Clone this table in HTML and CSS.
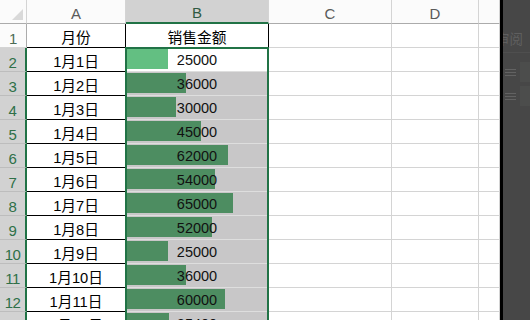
FILE: index.html
```html
<!DOCTYPE html>
<html lang="zh-CN">
<head>
<meta charset="utf-8">
<title>销售金额</title>
<link rel="stylesheet" href="styles.css">
</head>
<body>
<div class="page">
  <div class="sheet">
    <div class="grid">
      <div class="hd corner"><span class="tri"></span></div>
      <div class="hd col">A</div>
      <div class="hd col sel">B</div>
      <div class="hd col">C</div>
      <div class="hd col">D</div>
      <div class="hd col"></div>

      <div class="rh">1</div>
      <div class="a top">月份</div>
      <div class="b title">销售金额</div>
      <div class="c"></div><div class="c"></div><div class="c"></div>

      <div class="rh on">2</div>
      <div class="a">1月1日</div>
      <div class="b active"><div class="bar" style="width:41px"></div><span class="v">25000</span></div>
      <div class="c"></div><div class="c"></div><div class="c"></div>

      <div class="rh on">3</div>
      <div class="a">1月2日</div>
      <div class="b"><div class="bar" style="width:59px"></div><span class="v">36000</span></div>
      <div class="c"></div><div class="c"></div><div class="c"></div>

      <div class="rh on">4</div>
      <div class="a">1月3日</div>
      <div class="b"><div class="bar" style="width:49px"></div><span class="v">30000</span></div>
      <div class="c"></div><div class="c"></div><div class="c"></div>

      <div class="rh on">5</div>
      <div class="a">1月4日</div>
      <div class="b"><div class="bar" style="width:74px"></div><span class="v">45000</span></div>
      <div class="c"></div><div class="c"></div><div class="c"></div>

      <div class="rh on">6</div>
      <div class="a">1月5日</div>
      <div class="b"><div class="bar" style="width:101px"></div><span class="v">62000</span></div>
      <div class="c"></div><div class="c"></div><div class="c"></div>

      <div class="rh on">7</div>
      <div class="a">1月6日</div>
      <div class="b"><div class="bar" style="width:88px"></div><span class="v">54000</span></div>
      <div class="c"></div><div class="c"></div><div class="c"></div>

      <div class="rh on">8</div>
      <div class="a">1月7日</div>
      <div class="b"><div class="bar" style="width:106px"></div><span class="v">65000</span></div>
      <div class="c"></div><div class="c"></div><div class="c"></div>

      <div class="rh on">9</div>
      <div class="a">1月8日</div>
      <div class="b"><div class="bar" style="width:85px"></div><span class="v">52000</span></div>
      <div class="c"></div><div class="c"></div><div class="c"></div>

      <div class="rh on">10</div>
      <div class="a">1月9日</div>
      <div class="b"><div class="bar" style="width:41px"></div><span class="v">25000</span></div>
      <div class="c"></div><div class="c"></div><div class="c"></div>

      <div class="rh on">11</div>
      <div class="a">1月10日</div>
      <div class="b"><div class="bar" style="width:59px"></div><span class="v">36000</span></div>
      <div class="c"></div><div class="c"></div><div class="c"></div>

      <div class="rh on">12</div>
      <div class="a">1月11日</div>
      <div class="b"><div class="bar" style="width:98px"></div><span class="v">60000</span></div>
      <div class="c"></div><div class="c"></div><div class="c"></div>

      <div class="rh on">13</div>
      <div class="a">1月12日</div>
      <div class="b"><div class="bar" style="width:42px"></div><span class="v">25400</span></div>
      <div class="c"></div><div class="c"></div><div class="c"></div>
    </div>
    <div class="selection"></div>
  </div>
  <div class="divider"></div>
  <div class="panel">
    <div class="ghost-tab">审阅</div>
    <div class="ghost-rule"></div>
    <div class="ghost-row"><span class="lines"><i></i><i></i><i></i></span><span class="box"></span></div>
    <div class="ghost-row"><span class="lines"><i></i><i></i><i></i></span><span class="box"></span></div>
  </div>
</div>
</body>
</html>
```

FILE: styles.css
```css
* { box-sizing: border-box; }
html, body { margin: 0; padding: 0; }
body {
  width: 530px;
  height: 320px;
  overflow: hidden;
  background: #fff;
  font-family: "Liberation Sans", "Noto Sans CJK SC", sans-serif;
}
.page {
  display: flex;
  width: 530px;
  height: 320px;
  overflow: hidden;
}
.sheet {
  position: relative;
  width: 500px;
  height: 320px;
  overflow: hidden;
  background: #fff;
}
.grid {
  display: grid;
  grid-template-columns: 27px 99px 143px 123px 87px 21px;
  grid-template-rows: 24px;
  grid-auto-rows: 24px;
}
.grid > div {
  border-right: 1px solid #d4d4d4;
  border-bottom: 1px solid #d4d4d4;
}
.hd {
  background: #fbfbfb;
  border-bottom-color: #ababab !important;
  color: #5a5a5a;
  font-size: 15px;
  display: flex;
  justify-content: center;
  align-items: flex-end;
  padding-bottom: 1px;
}
.corner {
  position: relative;
  align-items: flex-end;
  justify-content: flex-end;
  padding: 0 3px 3px 0;
}
.tri {
  width: 0;
  height: 0;
  border-left: 11px solid transparent;
  border-bottom: 11px solid #d9d9d9;
}
.hd.sel {
  background: #d2d2d2;
  color: #2f5a42;
  border-bottom: 2px solid #217346 !important;
}
.rh {
  background: #fbfbfb;
  color: #4a6b55;
  font-size: 15px;
  display: flex;
  justify-content: center;
  align-items: flex-end;
  padding-bottom: 0;
  letter-spacing: -0.5px;
  border-right-color: #ababab !important;
}
.rh.on {
  background: #d2d2d2;
  color: #2e7048;
  border-right: 2px solid #217346 !important;
  border-bottom-color: #bdbdbd !important;
}
.a {
  display: flex;
  align-items: center;
  justify-content: center;
  font-size: 14.7px;
  color: #000;
  border-right: 1px solid #000 !important;
  border-bottom: 1px solid #000 !important;
  padding-top: 1px;
}
.b {
  display: grid;
  background: #c8c7c8;
  border-right: 1px solid #000 !important;
  border-bottom: 1px solid #dedede !important;
}
.b.title {
  background: #fff;
  border-bottom: 1px solid #000 !important;
  display: flex;
  align-items: center;
  justify-content: center;
  font-size: 14.7px;
  color: #000;
  padding-top: 1px;
}
.b.active {
  background: #fff;
}
.bar {
  grid-area: 1 / 1;
  justify-self: start;
  margin: 1px 0 2px 1px;
  background: #4d8d61;
}
.b.active .bar {
  background: #63bf82;
}
.v {
  grid-area: 1 / 1;
  justify-self: center;
  align-self: center;
  font-size: 14.5px;
  color: #111;
  padding-top: 1px;
}
.selection {
  position: absolute;
  left: 125px;
  top: 47px;
  width: 144px;
  height: 300px;
  border: 2px solid #217346;
  pointer-events: none;
}
.divider {
  width: 3px;
  height: 320px;
  background: #000;
}
.panel {
  width: 27px;
  height: 320px;
  background: #474747;
  overflow: hidden;
  display: flex;
  flex-direction: column;
}
.ghost-tab {
  margin: 31px 0 0 -7px;
  font-family: "Noto Sans CJK SC", sans-serif;
  font-size: 13.5px;
  line-height: 15px;
  color: #5f5f5f;
  white-space: nowrap;
}
.ghost-rule {
  margin-top: 6px;
  height: 1px;
  background: #4f4f4f;
}
.ghost-row {
  display: flex;
  align-items: center;
  gap: 4px;
  margin: 8px 0 0 2px;
  height: 22px;
}
.ghost-row + .ghost-row {
  margin-top: 2px;
}
.lines {
  display: flex;
  flex-direction: column;
  gap: 2px;
}
.lines i {
  display: block;
  width: 11px;
  height: 1px;
  background: #626262;
}
.box {
  width: 12px;
  height: 20px;
  background: #4c4d4c;
}
```
